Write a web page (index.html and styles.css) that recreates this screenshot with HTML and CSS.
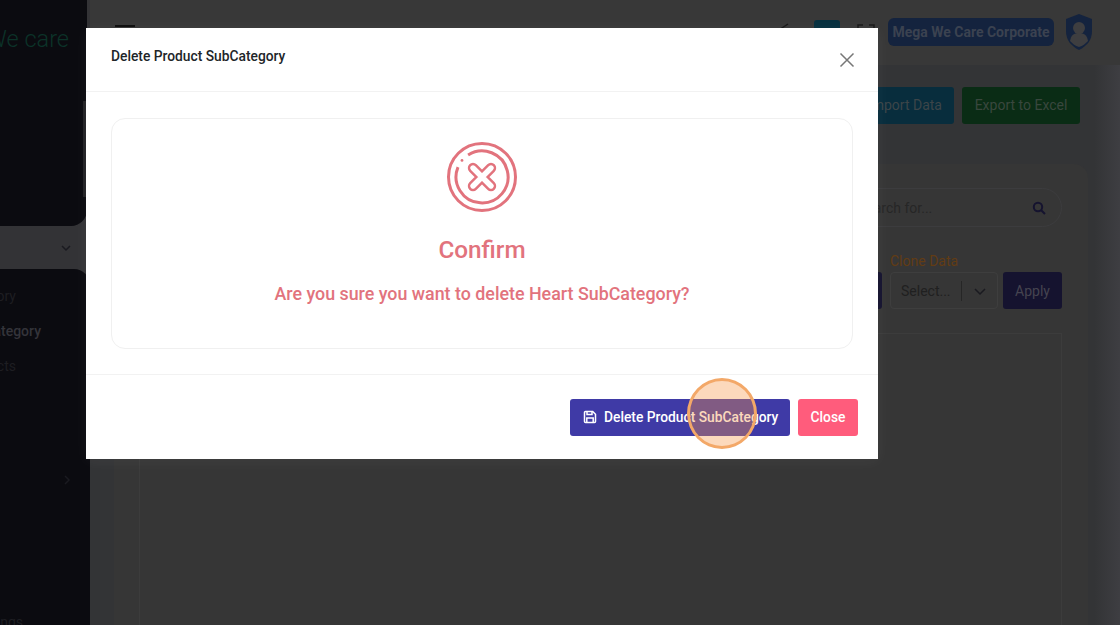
FILE: index.html
```html
<!DOCTYPE html>
<html lang="en">
<head>
  <meta charset="UTF-8">
  <title>Product SubCategory</title>
  <link rel="stylesheet" href="styles.css">
</head>
<body>

  <div class="app">

    <!-- Sidebar -->
    <aside class="sidebar">
      <div class="sidebar__top">
        <div class="logo">We care</div>
        <span class="thumb thumb--long"></span>
      </div>
      <div class="sidebar__section">
        <svg class="chevron" width="10" height="10" viewBox="0 0 10 10"><path d="M1 3l4 4 4-4"/></svg>
      </div>
      <div class="sidebar__menu">
        <span class="thumb thumb--short"></span>
        <a class="menu-item">Category</a>
        <a class="menu-item menu-item--active">SubCategory</a>
        <a class="menu-item">Products</a>
        <div class="menu-more">
          <svg class="chevron" width="10" height="10" viewBox="0 0 10 10"><path d="M3 1l4 4-4 4"/></svg>
        </div>
        <a class="menu-item menu-item--last">Settings</a>
      </div>
    </aside>

    <!-- Main -->
    <div class="main">
      <header class="topbar">
        <div class="burger"></div>
        <div class="topbar__right">
          <svg class="top-icon" width="8" height="10" viewBox="0 0 8 10"><path d="M7 1L1 5l6 4"/></svg>
          <span class="flag"></span>
          <svg class="top-icon top-icon--full" width="18" height="18" viewBox="0 0 18 18"><path d="M1 6V1h5M12 1h5v5M17 12v5h-5M6 17H1v-5"/></svg>
          <button class="company">Mega We Care Corporate</button>
          <svg class="shield" width="28" height="36" viewBox="0 0 28 36">
            <path d="M14 0l13 5v12c0 9-5 15-13 19C6 32 1 26 1 17V5z" fill="#14233e"/>
            <circle cx="14" cy="14" r="6" fill="#3e3e40"/>
            <path d="M5 27c1-6 4-8 9-8s8 2 9 8c-3 3-5 5-9 6-4-1-6-3-9-6z" fill="#3e3e40"/>
          </svg>
        </div>
      </header>

      <div class="content">
        <div class="actions">
          <button class="btn btn--teal">Import Data</button>
          <button class="btn btn--green">Export to Excel</button>
        </div>

        <section class="card">
          <div class="search">
            <span>Search for...</span>
            <svg width="14" height="14" viewBox="0 0 14 14" class="search__icon"><circle cx="6" cy="6" r="4.2"/><path d="M9.2 9.2L13 13"/></svg>
          </div>

          <div class="filters">
            <button class="btn btn--indigo btn--filter">Filter</button>
            <div class="clone">
              <label class="clone__label">Clone Data</label>
              <div class="clone__row">
                <div class="select">
                  <span class="select__text">Select...</span>
                  <span class="select__sep"></span>
                  <svg class="chevron" width="12" height="12" viewBox="0 0 12 12"><path d="M1 4l5 5 5-5"/></svg>
                </div>
                <button class="btn btn--indigo btn--apply">Apply</button>
              </div>
            </div>
          </div>

          <div class="table-box"></div>
        </section>
      </div>
    </div>
  </div>

  <!-- Delete dialog -->
  <div class="modal">
    <div class="modal__header">
      <h5 class="modal__title">Delete Product SubCategory</h5>
      <svg class="modal__close" width="16" height="16" viewBox="0 0 16 16"><path d="M1.5 1.5l13 13M14.5 1.5l-13 13"/></svg>
    </div>

    <div class="modal__body">
      <div class="confirm">
        <svg class="confirm__icon" width="72" height="72" viewBox="0 0 72 72">
          <circle class="ring" cx="36" cy="36" r="33.5"/>
          <path class="ring" d="M22.1 14A26 26 0 1 1 12 26.1"/>
          <circle cx="16" cy="19.4" r="1.4" fill="#e2737d"/>
          <path class="cross-out" d="M27 27l18 18M45 27L27 45"/>
          <path class="cross-in" d="M27 27l18 18M45 27L27 45"/>
        </svg>
        <h3 class="confirm__title">Confirm</h3>
        <p class="confirm__text">Are you sure you want to delete Heart SubCategory?</p>
      </div>
    </div>

    <div class="modal__footer">
      <button class="btn-delete">
        <svg width="14" height="14" viewBox="0 0 14 14"><path d="M1.5 2.5a1 1 0 0 1 1-1h7.2l2.8 2.8v7.2a1 1 0 0 1-1 1h-9a1 1 0 0 1-1-1z"/><path d="M4 1.5v3h5v-3M3.8 12.5V8h6.4v4.5"/></svg>
        Delete Product SubCategory
      </button>
      <button class="btn-close">Close</button>
    </div>
  </div>

  <!-- Click highlight -->
  <div class="click-mark"></div>

</body>
</html>
```

FILE: styles.css
```css
* {
  box-sizing: border-box;
}

html, body {
  margin: 0;
  height: 625px;
  overflow: hidden;
}

body {
  font-family: Roboto, "Liberation Sans", sans-serif;
  background: #333436;
  position: relative;
}

button {
  font-family: inherit;
  border: none;
}

.app {
  display: flex;
  height: 625px;
}

/* Sidebar */
.sidebar {
  width: 90px;
  flex-shrink: 0;
  display: flex;
  flex-direction: column;
  background: #333336;
  overflow: hidden;
}

.sidebar__top {
  height: 226px;
  flex-shrink: 0;
  background: #0b0b10;
  border-bottom-right-radius: 16px;
  position: relative;
  padding: 25px 18px 0 0;
  margin-right: 3px;
}

.logo {
  font-size: 23.5px;
  font-weight: 300;
  line-height: 28px;
  color: #0c3329;
  white-space: nowrap;
  display: flex;
  justify-content: flex-end;
}

.thumb {
  position: absolute;
  right: 0;
  width: 4px;
  background: #222225;
}

.thumb--long {
  top: 101px;
  height: 96px;
}

.thumb--short {
  top: 30px;
  height: 13px;
}

.sidebar__section {
  height: 43px;
  flex-shrink: 0;
  display: flex;
  align-items: center;
  justify-content: flex-end;
  padding-right: 19px;
}

.chevron {
  fill: none;
  stroke: #1a1a20;
  stroke-width: 1.5;
}

.sidebar__menu {
  flex: 1;
  min-height: 0;
  overflow: hidden;
  background: #0b0b10;
  border-top-right-radius: 16px;
  position: relative;
  padding-top: 10px;
  display: flex;
  flex-direction: column;
  align-items: flex-end;
}

.menu-item {
  height: 35px;
  flex-shrink: 0;
  line-height: 35px;
  font-size: 14px;
  color: #1e1e22;
  white-space: nowrap;
  padding-right: 74px;
}

.menu-item--active {
  color: #34343a;
  font-weight: 500;
  padding-right: 49px;
}

.menu-more {
  height: 228px;
  flex-shrink: 0;
  padding: 91px 18px 0 0;
  display: flex;
  align-items: flex-start;
  align-self: flex-end;
}

.menu-item--last {
  padding-right: 67px;
  margin-top: -7px;
}

/* Main */
.main {
  flex: 1;
  min-width: 0;
  display: flex;
  flex-direction: column;
  background: linear-gradient(to right, #333436 97.5%, #3e3e42);
}

.topbar {
  height: 65px;
  background: #383838;
  display: flex;
  justify-content: space-between;
  padding: 0 27px 0 25px;
  flex-shrink: 0;
}

.burger {
  width: 20px;
  height: 2px;
  background: #0d0d0d;
  margin-top: 25px;
}

.topbar__right {
  display: flex;
  align-items: flex-start;
  padding-top: 18px;
}

.top-icon {
  fill: none;
  stroke: #181818;
  stroke-width: 1.5;
  margin: 5px 25px 0 0;
}

.top-icon--full {
  margin: 6px 13px 0 17px;
}

.flag {
  width: 26px;
  height: 26px;
  background: #07303f;
  border-radius: 3px;
  margin-top: 2px;
}

.company {
  width: 166px;
  height: 28px;
  border-radius: 6px;
  background: #14233e;
  color: #3b4250;
  font-size: 14px;
  font-weight: 700;
  padding: 0;
  margin-right: 11px;
}

.shield {
  margin-top: -4px;
}

.content {
  flex: 1;
  padding: 22px 8px 0 24px;
  display: flex;
  flex-direction: column;
}

.actions {
  display: flex;
  justify-content: flex-end;
  gap: 8px;
  margin-right: 32px;
  height: 37px;
}

.btn {
  height: 37px;
  border-radius: 3px;
  font-size: 14px;
  color: #3c4549;
  padding: 0 12px 1px;
}

.btn--teal {
  background: #082d3d;
}

.btn--green {
  width: 118px;
  background: #0a2c15;
  color: #39473e;
}

.btn--indigo {
  background: #15132f;
  color: #45444f;
}

.card {
  margin: 40px 0 0;
  width: 974px;
  flex: 1;
  background: #363636;
  border-radius: 14px 14px 0 0;
  padding: 24px 26px 0 25px;
  display: flex;
  flex-direction: column;
}

.search {
  align-self: flex-end;
  width: 220px;
  height: 39px;
  border: 1px solid #3c3c3e;
  border-radius: 20px;
  display: flex;
  align-items: center;
  justify-content: space-between;
  padding: 0 15px;
  font-size: 14px;
  color: #262626;
}

.search__icon {
  fill: none;
  stroke: #15132f;
  stroke-width: 2;
}

.filters {
  display: flex;
  justify-content: flex-end;
  align-items: flex-end;
  gap: 8px;
  margin-top: 24px;
}

.btn--filter {
  width: 79px;
}

.clone__label {
  display: block;
  font-size: 14px;
  line-height: 20px;
  margin-bottom: 1px;
  color: #623c14;
}

.clone__row {
  display: flex;
  gap: 5px;
}

.select {
  width: 108px;
  height: 37px;
  border: 1px solid #3e3e3e;
  border-radius: 4px;
  display: flex;
  align-items: center;
  padding-left: 10px;
  font-size: 14px;
  color: #202020;
}

.select__sep {
  width: 1px;
  height: 20px;
  background: #262626;
  margin: 0 12px 0 10px;
}

.btn--apply {
  width: 59px;
  padding: 0;
}

.table-box {
  flex: 1;
  margin: 24px 0 0 0;
  border: 1px solid #3c3c3c;
  border-bottom: none;
}

/* Modal */
.modal {
  position: absolute;
  left: 86px;
  top: 28px;
  width: 792px;
  height: 431px;
  background: #fff;
  display: flex;
  flex-direction: column;
  box-shadow: 0 2px 14px rgba(255, 255, 255, 0.05);
}

.modal__header {
  height: 64px;
  border-bottom: 1px solid #f2f2f2;
  display: flex;
  justify-content: space-between;
  padding: 0 23px 0 25px;
  flex-shrink: 0;
}

.modal__title {
  margin: 18px 0 0;
  font-size: 13.8px;
  line-height: 20px;
  font-weight: 500;
  color: #212529;
}

.modal__close {
  margin-top: 24px;
  fill: none;
  stroke: #777;
  stroke-width: 1.5;
}

.modal__body {
  flex: 1;
  padding: 26px 25px 25px;
}

.confirm {
  height: 231px;
  border: 1px solid #f0f0f0;
  border-radius: 14px;
  display: flex;
  flex-direction: column;
  align-items: center;
  padding-top: 22px;
}

.confirm__icon {
  display: block;
}

.ring {
  fill: none;
  stroke: #e2737d;
  stroke-width: 3;
}

.cross-out,
.cross-in {
  fill: none;
  stroke-linecap: round;
}

.cross-out {
  stroke: #e2737d;
  stroke-width: 10.4;
}

.cross-in {
  stroke: #fff;
  stroke-width: 5.4;
}

.confirm__title {
  margin: 20px 0 0;
  font-size: 24.3px;
  line-height: 34px;
  font-weight: 500;
  color: #e2737d;
}

.confirm__text {
  margin: 14px 0 0;
  font-size: 17.85px;
  line-height: 26px;
  font-weight: 500;
  color: #e2737d;
}

.modal__footer {
  height: 85px;
  border-top: 1px solid #f2f2f2;
  display: flex;
  justify-content: flex-end;
  gap: 8px;
  padding: 24px 20px 0 0;
  flex-shrink: 0;
}

.btn-delete,
.btn-close {
  height: 37px;
  border-radius: 3px;
  color: #fff;
  font-size: 13.8px;
  font-weight: 500;
  padding: 0 0 1px;
}

.btn-delete {
  width: 220px;
  background: #3f3aa6;
  display: flex;
  align-items: center;
  gap: 7px;
  padding-left: 13px;
}

.btn-delete svg {
  fill: none;
  stroke: #fff;
  stroke-width: 1.5;
}

.btn-close {
  width: 60px;
  background: #ff5c7c;
}

/* Orange circle over the clicked button */
.click-mark {
  position: absolute;
  left: 687px;
  top: 378px;
  width: 70px;
  height: 71px;
  border-radius: 50%;
  border: 3px solid #f3a868;
  background: rgba(247, 150, 70, 0.36);
}
```
